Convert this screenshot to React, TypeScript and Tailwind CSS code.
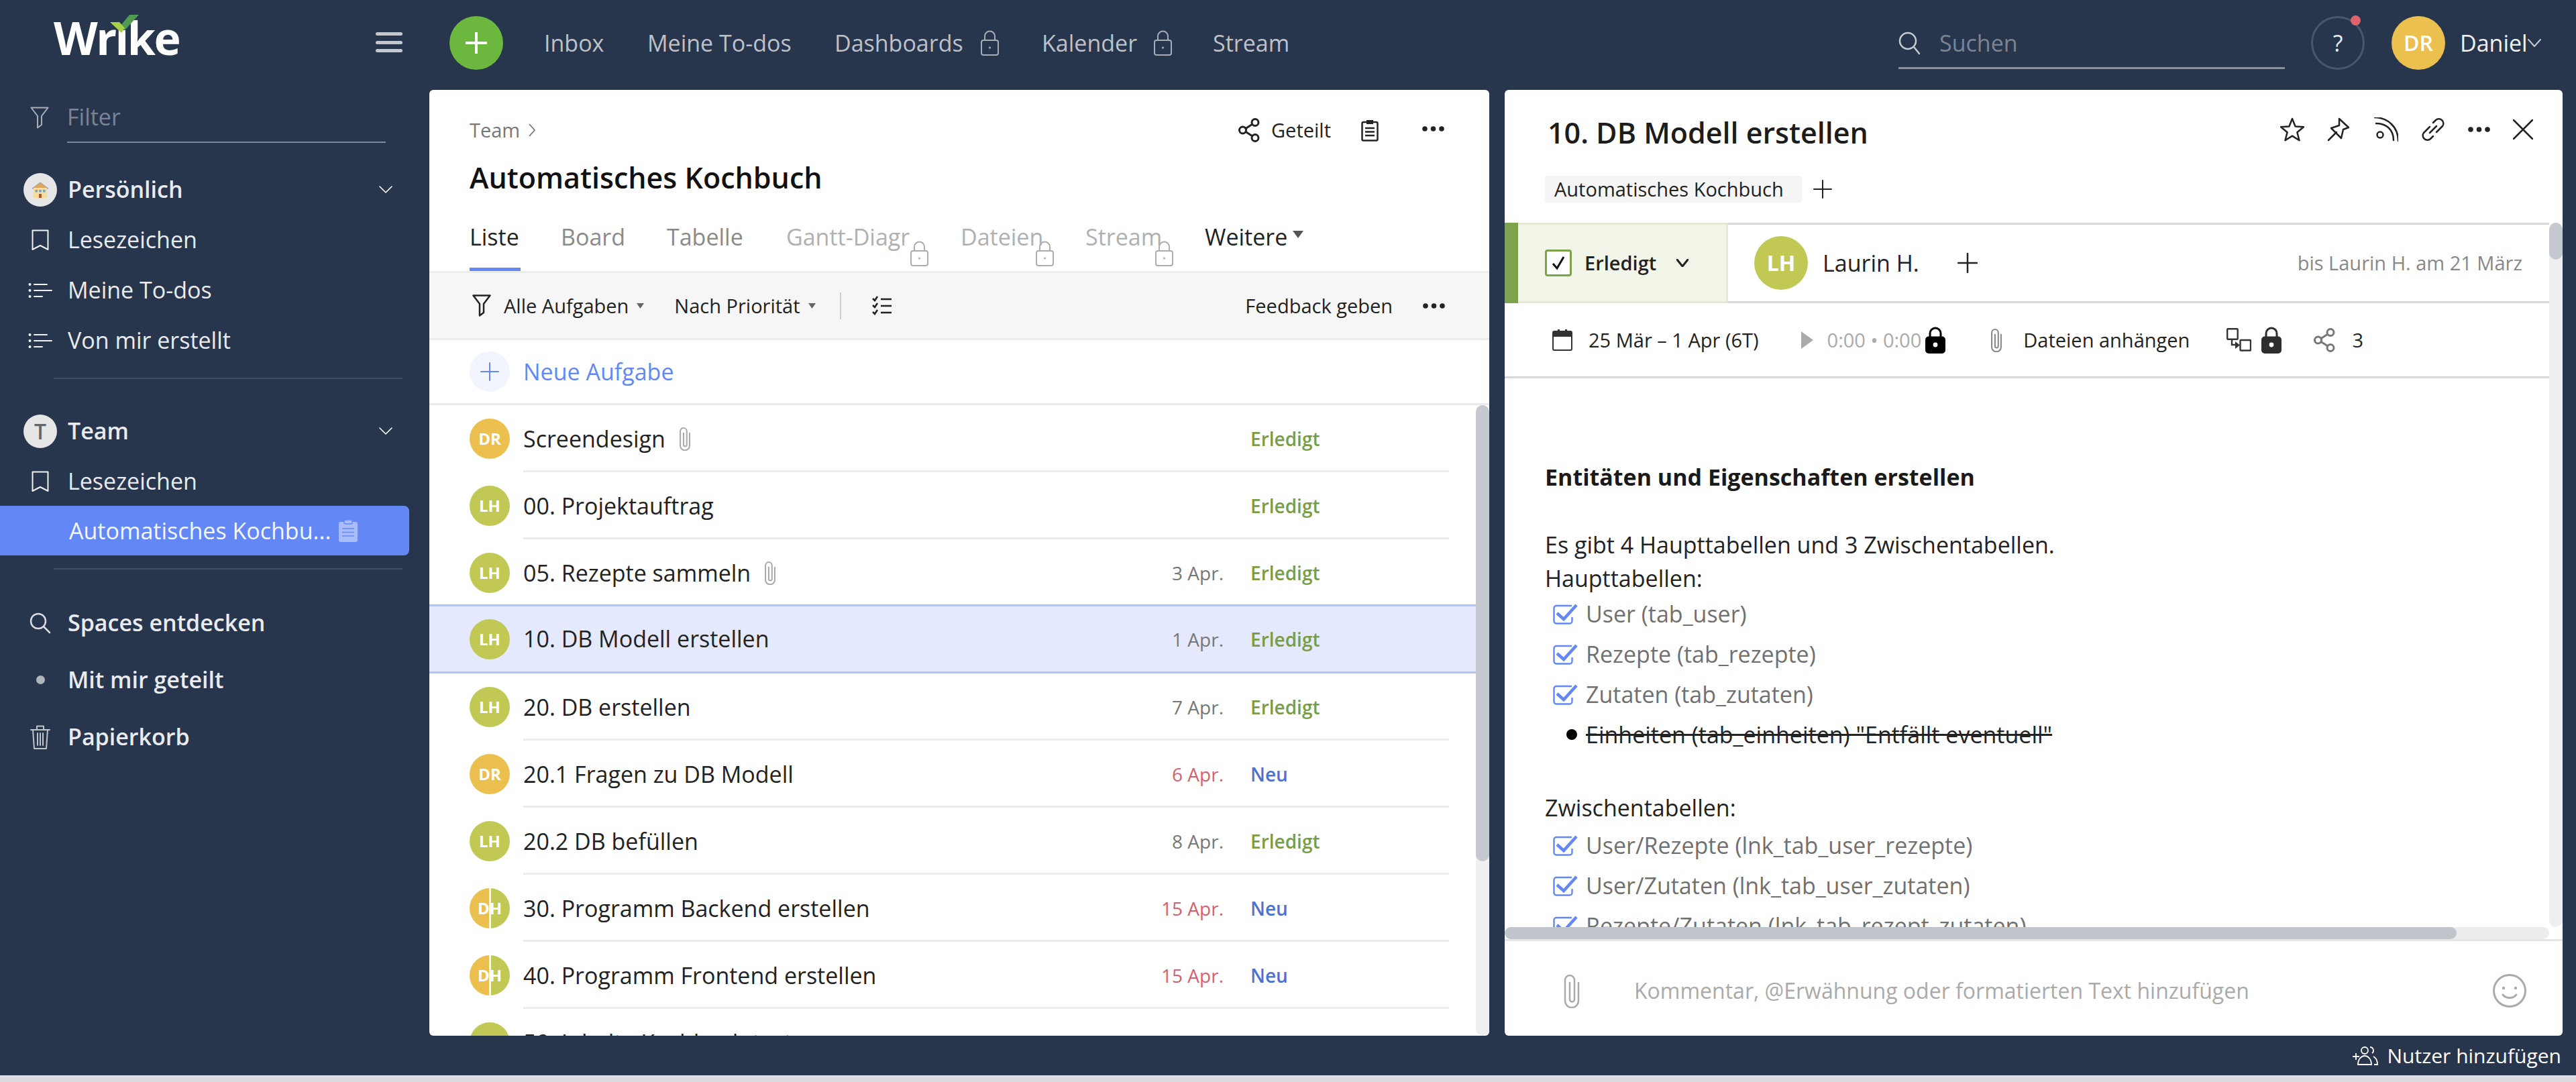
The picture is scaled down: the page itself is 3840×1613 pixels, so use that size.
import React from "react";

const font = { fontFamily: '"Open Sans", sans-serif' };

function Svg({ w, h, vb, children, className = "", color = "currentColor", sw = 2, fill = "none" }: any) {
  return (
    <svg width={w} height={h} viewBox={vb || `0 0 ${w} ${h}`} fill={fill} stroke={color} strokeWidth={sw} strokeLinecap="round" strokeLinejoin="round" className={`shrink-0 ${className}`}>
      {children}
    </svg>
  );
}

function LockOutline({ color = "#a8adb5", className = "" }: any) {
  return (
    <Svg w={29} h={40} color={color} className={className}>
      <path d="M7 16 V10 a7.5 7.5 0 0 1 15 0 V16" />
      <rect x="2" y="16" width="25" height="22" rx="3" />
      <circle cx="14.5" cy="27" r="1.6" fill={color} stroke="none" />
    </Svg>
  );
}
function LockSolid({ color = "#000" }: any) {
  return (
    <Svg w={30} h={40} color={color} sw={3}>
      <path d="M7 17 V10 a8 8 0 0 1 16 0 V17" />
      <rect x="1.5" y="16" width="27" height="22.5" rx="3.5" fill={color} />
      <circle cx="15" cy="27" r="3.4" fill="#fff" stroke="none" />
    </Svg>
  );
}
function Clip({ w = 26, h = 52, color = "#aaa", sw = 2.5 }: any) {
  return (
    <Svg w={w} h={h} vb="0 0 26 52" color={color} sw={sw}>
      <path d="M23 14 V41 a10 10 0 0 1 -20 0 V10 a7 7 0 0 1 14 0 V39 a3.5 3.5 0 0 1 -7 0 V14" />
    </Svg>
  );
}
function Dots() {
  return (
    <svg width="33" height="8" viewBox="0 0 33 8" className="shrink-0">
      <circle cx="4" cy="4" r="3.8" fill="#222" />
      <circle cx="16.5" cy="4" r="3.8" fill="#222" />
      <circle cx="29" cy="4" r="3.8" fill="#222" />
    </svg>
  );
}
function Caret({ big = false }: any) {
  return big ? (
    <svg width="16" height="11" viewBox="0 0 16 11" className="shrink-0"><path d="M0 0H16L8 11Z" fill="#555" /></svg>
  ) : (
    <svg width="11" height="8" viewBox="0 0 11 8" className="shrink-0"><path d="M0 0H11L5.5 8Z" fill="#666" /></svg>
  );
}
function Plus({ size = 28, color = "#222", sw = 2.5 }: any) {
  return (
    <Svg w={size} h={size} color={color} sw={sw}>
      <path d={`M${size / 2} 1V${size - 1}M1 ${size / 2}H${size - 1}`} />
    </Svg>
  );
}
function Share({ color = "#222", w = 32, h = 36 }: any) {
  return (
    <Svg w={w} h={h} vb="0 0 32 36" color={color} sw={3}>
      <circle cx="25" cy="6.5" r="5" />
      <circle cx="6.5" cy="18" r="5" />
      <circle cx="25" cy="29.5" r="5" />
      <path d="M11 15.5 L20.7 9.3 M11 20.5 L20.7 26.7" />
    </Svg>
  );
}
function Chevron({ w = 20, h = 11, color = "#fff", sw = 1.6 }: any) {
  return (
    <Svg w={w} h={h} color={color} sw={sw}>
      <path d={`M1 1 L${w / 2} ${h - 1} L${w - 1} 1`} />
    </Svg>
  );
}
function BookmarkI() {
  return (
    <Svg w={26} h={32} color="#f0f1f3" sw={2}>
      <path d="M1.5 1.5H24.5V30L13 24L1.5 30Z" />
    </Svg>
  );
}
function ListI() {
  return (
    <Svg w={36} h={24} color="#f0f1f3" sw={2}>
      <circle cx="2.5" cy="3" r="2" fill="#f0f1f3" stroke="none" />
      <circle cx="2.5" cy="12" r="2" fill="#f0f1f3" stroke="none" />
      <circle cx="2.5" cy="21" r="2" fill="#f0f1f3" stroke="none" />
      <path d="M9 3H28M9 12H35M9 21H21" />
    </Svg>
  );
}

function Logo() {
  return (
    <div className="relative mt-[26px] h-[60px] w-[178px] font-bold text-white text-[68px] leading-[60px] tracking-[-2.5px]">
      Wrıke
      <svg width="130" height="34" viewBox="0 -6 130 34" className="absolute left-0 top-[-6px]">
        <path d="M113 -4H127L106 19L100 12Z" fill="#4f9c50" />
        <path d="M84 7H98L106 16L101 23Z" fill="#a8cf45" />
      </svg>
    </div>
  );
}

function SideRow({ icon, text, bold = false, chevron = false, h = "h-[75px]" }: any) {
  return (
    <div className={`flex items-center ${h} pl-[35px] text-[#e9ebef] text-[34px]`}>
      <div className="w-[50px] flex justify-center shrink-0">{icon}</div>
      <span className={`ml-[16px] ${bold ? "font-semibold" : ""}`}>{text}</span>
      {chevron && <div className="ml-auto mr-[55px]"><Chevron /></div>}
    </div>
  );
}

function Sidebar() {
  return (
    <div className="w-[640px] shrink-0 flex flex-col">
      <div className="h-[138px] flex items-start pl-[80px] pr-[40px] justify-between">
        <Logo />
        <div className="mt-[48px] w-[40px] h-[30px] flex flex-col justify-between">
          <div className="h-[5px] rounded-full bg-[#c3c7ce]" />
          <div className="h-[5px] rounded-full bg-[#c3c7ce]" />
          <div className="h-[5px] rounded-full bg-[#c3c7ce]" />
        </div>
      </div>
      <div className="h-[75px] flex pl-[45px]">
        <div className="pt-[21px] w-[55px]">
          <Svg w={28} h={33} color="#a9aeb8" sw={2}>
            <path d="M1.5 1.5H26.5L17 14V27L11 31.5V14Z" />
          </Svg>
        </div>
        <div className="w-[475px] h-[75px] border-b-2 border-[#7e8796] flex items-center text-[34px] text-[#7a8494]">Filter</div>
      </div>
      <div className="mt-[32px]">
        <SideRow bold chevron text="Persönlich" icon={
          <div className="w-[50px] h-[50px] rounded-full bg-[#e6e6e6] flex items-center justify-center">
            <svg width="26" height="26" viewBox="0 0 26 26">
              <path d="M13 2L25 11H1Z" fill="#e3a55c" stroke="#9a9aa5" strokeWidth="1" />
              <rect x="3" y="10" width="20" height="15" fill="#f6dc9f" />
              <rect x="5.5" y="13" width="3.5" height="3.5" fill="#6aa7dd" />
              <rect x="11.2" y="13" width="3.5" height="3.5" fill="#6aa7dd" />
              <rect x="17" y="13" width="3.5" height="3.5" fill="#6aa7dd" />
              <rect x="11" y="19" width="4" height="6" fill="#b5562f" />
            </svg>
          </div>
        } />
        <SideRow text="Lesezeichen" icon={<BookmarkI />} />
        <SideRow text="Meine To-dos" icon={<ListI />} />
        <SideRow text="Von mir erstellt" icon={<ListI />} />
      </div>
      <div className="mt-[18px] ml-[80px] w-[520px] h-[2px] bg-[#3e4b62]" />
      <div className="mt-[40px]">
        <SideRow bold chevron text="Team" icon={
          <div className="w-[50px] h-[50px] rounded-full bg-[#e6e6e6] flex items-center justify-center text-[32px] text-[#666] font-semibold">T</div>
        } />
        <SideRow text="Lesezeichen" icon={<BookmarkI />} />
      </div>
      <div className="-mt-px w-[610px] h-[74px] rounded-r-[8px] bg-[#6388f5] flex items-center pl-[103px] text-[34px] text-[#f4f6fe]">
        <span>Automatisches Kochbu...</span>
        <svg width="28" height="33" viewBox="0 0 28 33" className="ml-[12px] shrink-0">
          <rect x="0" y="3" width="28" height="30" rx="3" fill="#a9bdfb" />
          <rect x="8" y="0" width="12" height="6" rx="2" fill="#a9bdfb" stroke="#6388f5" strokeWidth="1.5" />
          <path d="M5 13H23M5 18.5H23M5 24H23" stroke="#6388f5" strokeWidth="1.6" />
        </svg>
      </div>
      <div className="mt-[19px] ml-[80px] w-[520px] h-[2px] bg-[#3e4b62]" />
      <div className="mt-[37px]">
        <SideRow bold h="h-[85px]" text="Spaces entdecken" icon={
          <Svg w={32} h={32} color="#d9dce2" sw={2.5}>
            <circle cx="13" cy="13" r="11" />
            <path d="M21 21L30 30" />
          </Svg>
        } />
        <SideRow bold h="h-[85px]" text="Mit mir geteilt" icon={<div className="w-[13px] h-[13px] rounded-full bg-[#aeb3bc]" />} />
        <SideRow bold h="h-[85px]" text="Papierkorb" icon={
          <Svg w={30} h={38} color="#bfc3ca" sw={2}>
            <path d="M1 8H29M10 8V2.5H20V8M4 8L6 36H24L26 8M11 13V31M15 13V31M19 13V31" />
          </Svg>
        } />
      </div>
    </div>
  );
}

function NavLink({ w, children }: any) {
  return <div className={`${w} flex items-center shrink-0`}>{children}</div>;
}

function TopBar() {
  return (
    <div className="h-[134px] shrink-0 flex items-center pb-[6px] text-[34px] text-[#bcc1ca]">
      <div className="ml-[30px] w-[80px] h-[80px] rounded-full bg-[#6cb83f] flex items-center justify-center mr-[61px]">
        <Plus size={32} color="#fff" sw={4} />
      </div>
      <NavLink w="w-[154px]">Inbox</NavLink>
      <NavLink w="w-[279px]">Meine To-dos</NavLink>
      <NavLink w="w-[309px]">Dashboards<LockOutline className="ml-[25px]" /></NavLink>
      <NavLink w="w-[255px]">Kalender<LockOutline className="ml-[24px]" /></NavLink>
      <NavLink w="w-[110px]">Stream</NavLink>
      <div className="ml-auto mt-[4px] w-[576px] h-[74px] border-b-[3px] border-[#8a92a0] flex items-center">
        <Svg w={32} h={36} color="#c6cad1" sw={2.5}>
          <circle cx="14" cy="14" r="12" />
          <path d="M23 23L31 33" />
        </Svg>
        <span className="ml-[29px] text-[#7a8494]">Suchen</span>
      </div>
      <div className="relative ml-[39px] w-[80px] h-[80px] rounded-full border-[3px] border-[#4b5769] flex items-center justify-center text-[#e9ebef]">
        ?
        <div className="absolute right-[3px] top-[-4px] w-[15px] h-[15px] rounded-full bg-[#dd646c]" />
      </div>
      <div className="ml-[40px] w-[80px] h-[80px] rounded-full bg-[#ecc04e] flex items-center justify-center text-white text-[32px] font-semibold">DR</div>
      <div className="ml-[22px] w-[173px] flex items-center text-[#f0f1f3]">
        Daniel
        <Chevron w={20} h={12} color="#c6cad1" sw={2} />
      </div>
    </div>
  );
}

function Avatar({ k, size = "w-[60px] h-[60px]", text = "text-[24px]" }: any) {
  if (k === "DH")
    return (
      <div className={`relative ${size} rounded-full overflow-hidden flex shrink-0 gap-[3px]`}>
        <div className="flex-1 bg-[#ecc04e]" />
        <div className="flex-1 bg-[#c1c954]" />
        <div className={`absolute inset-0 flex items-center justify-center text-white font-bold ${text}`}>DH</div>
      </div>
    );
  const bg = k === "DR" ? "bg-[#ecc04e]" : "bg-[#c1c954]";
  return <div className={`${size} ${bg} rounded-full flex items-center justify-center text-white font-bold shrink-0 ${text}`}>{k}</div>;
}

const rows = [
  { a: "DR", t: "Screendesign", clip: true, d: "", s: "Erledigt" },
  { a: "LH", t: "00. Projektauftrag", d: "", s: "Erledigt" },
  { a: "LH", t: "05. Rezepte sammeln", clip: true, d: "3 Apr.", s: "Erledigt" },
  { a: "LH", t: "10. DB Modell erstellen", d: "1 Apr.", s: "Erledigt", sel: true },
  { a: "LH", t: "20. DB erstellen", d: "7 Apr.", s: "Erledigt" },
  { a: "DR", t: "20.1 Fragen zu DB Modell", d: "6 Apr.", red: true, s: "Neu" },
  { a: "LH", t: "20.2 DB befüllen", d: "8 Apr.", s: "Erledigt" },
  { a: "DH", t: "30. Programm Backend erstellen", d: "15 Apr.", red: true, s: "Neu" },
  { a: "DH", t: "40. Programm Frontend erstellen", d: "15 Apr.", red: true, s: "Neu" },
  { a: "LH", t: "50. Inhalte Kochbuch testen", d: "", s: "" },
];

function Row({ r, hideSep }: any) {
  const content = (
    <>
      <div className="text-[#222] text-[34px] flex items-center">
        {r.t}
        {r.clip && <div className="ml-[20px] flex"><Clip w={18} h={36} sw={3} /></div>}
      </div>
      <div className={`ml-auto text-[28px] ${r.red ? "text-[#d9606a]" : "text-[#777]"}`}>{r.d}</div>
      <div className={`ml-[40px] w-[296px] text-[28px] font-semibold ${r.s === "Neu" ? "text-[#4a74d0]" : "text-[#7a9c44]"}`}>{r.s}</div>
    </>
  );
  if (r.sel) {
    return (
      <div className="-mt-[3px] h-[103px] shrink-0 flex items-center pl-[60px] pr-[40px] bg-[#e4e9fd] border-y-[3px] border-[#b2c5fb]">
        <Avatar k={r.a} />
        <div className="ml-[20px] flex-1 flex items-center">{content}</div>
      </div>
    );
  }
  return (
    <div className="h-[100px] shrink-0 flex items-center pl-[60px] pr-[40px]">
      <Avatar k={r.a} />
      <div className={`ml-[20px] flex-1 h-full flex items-center pt-[3px] border-b-[3px] ${hideSep ? "border-transparent" : "border-[#ececec]"}`}>{content}</div>
    </div>
  );
}

function Tab({ w, color, children, lock, active }: any) {
  return (
    <div className={`relative ${w} h-full pt-[38px] leading-[40px] shrink-0 ${color}`}>
      {children}
      {lock && <LockOutline color="#adadad" className={`absolute top-[63px] ${lock}`} />}
      {active && <div className="absolute left-0 bottom-0 w-[76px] h-[5px] bg-[#6388f5]" />}
    </div>
  );
}

function ListPanel() {
  return (
    <div className="w-[1580px] shrink-0 h-full bg-white rounded-[6px] overflow-hidden flex flex-col">
      <div className="h-[270px] shrink-0 px-[60px] pt-[40px]">
        <div className="h-[40px] flex items-center text-[#777] text-[29px]">
          Team
          <svg width="12" height="22" viewBox="0 0 12 22" fill="none" stroke="#777" strokeWidth="1.8" className="ml-[12px]"><path d="M2 2L10 11L2 20" /></svg>
          <div className="ml-auto flex items-center text-[#222]">
            <Share />
            <span className="ml-[17px]">Geteilt</span>
            <svg width="26" height="33" viewBox="0 0 26 33" fill="none" stroke="#222" strokeWidth="2.5" className="ml-[45px]">
              <rect x="1.5" y="4" width="23" height="27.5" rx="2" />
              <rect x="8" y="1" width="10" height="6" fill="#222" stroke="none" />
              <path d="M6 13H20M6 18.5H20M6 24H20" />
            </svg>
            <div className="ml-[65px] mr-[7px] mb-[4px] flex"><Dots /></div>
          </div>
        </div>
        <div className="mt-[21px] h-[60px] flex items-center text-[43px] font-semibold text-[#111]">Automatisches Kochbuch</div>
        <div className="flex h-[109px] text-[34px]">
          <Tab w="w-[136px]" color="text-[#222]" active>Liste</Tab>
          <Tab w="w-[158px]" color="text-[#8a8a8a]">Board</Tab>
          <Tab w="w-[178px]" color="text-[#8a8a8a]">Tabelle</Tab>
          <Tab w="w-[260px]" color="text-[#b0b0b0]" lock="left-[184px]">Gantt-Diagr</Tab>
          <Tab w="w-[186px]" color="text-[#b0b0b0]" lock="left-[111px]">Dateien</Tab>
          <Tab w="w-[178px]" color="text-[#b0b0b0]" lock="left-[103px]">Stream</Tab>
          <div className="pt-[38px] leading-[40px] text-[#222] flex items-start">
            Weitere
            <div className="ml-[8px] mt-[11px]"><Caret big /></div>
          </div>
        </div>
      </div>
      <div className="h-[103px] shrink-0 bg-[#f6f6f6] border-y-[3px] border-[#ececec] flex items-center pl-[64px] pr-[66px] text-[29px] text-[#222]">
        <Svg w={28} h={33} color="#222" sw={2.5}>
          <path d="M1.5 1.5H26.5L17 14V27L11 31.5V14Z" />
        </Svg>
        <span className="ml-[19px]">Alle Aufgaben</span>
        <div className="ml-[12px]"><Caret /></div>
        <span className="ml-[45px]">Nach Priorität</span>
        <div className="ml-[12px]"><Caret /></div>
        <div className="ml-[36px] w-[2px] h-[40px] bg-[#cfcfcf]" />
        <svg width="30" height="30" viewBox="0 0 30 30" fill="none" stroke="#222" strokeWidth="2.5" className="ml-[46px]">
          <path d="M1 4L4 7L8 1M1 14L4 17L8 11M1 24L4 27L8 21M13 5H29M13 15H29M13 25H29" />
        </svg>
        <span className="ml-auto mr-[45px]">Feedback geben</span>
        <Dots />
      </div>
      <div className="h-[97px] shrink-0 border-b-[3px] border-[#ececec] flex items-center pl-[60px]">
        <div className="w-[60px] h-[60px] rounded-full bg-[#f2f5fe] flex items-center justify-center">
          <Plus size={28} color="#6388f5" sw={2} />
        </div>
        <span className="ml-[20px] text-[34px] text-[#6388f5]">Neue Aufgabe</span>
      </div>
      <div className="flex-1 flex min-h-0">
        <div className="flex-1 flex flex-col overflow-hidden">
          {rows.map((r, i) => <Row key={i} r={r} hideSep={rows[i + 1]?.sel} />)}
        </div>
        <div className="w-[20px] bg-[#efeff1] rounded-full shrink-0">
          <div className="h-[680px] bg-[#c5c8ce] rounded-full" />
        </div>
      </div>
    </div>
  );
}

function CheckItem({ children }: any) {
  return (
    <div className="h-[60px] shrink-0 flex items-center text-[#707070]">
      <svg width="37" height="31" viewBox="0 0 37 31" fill="none" className="ml-[12px] mr-[12px] shrink-0">
        <path d="M28 3H5a3.5 3.5 0 0 0-3.5 3.5V26A3.5 3.5 0 0 0 5 29.5H25A3.5 3.5 0 0 0 28.5 26V20" stroke="#6388f5" strokeWidth="2.4" />
        <path d="M6 14L16 23L35 2" stroke="#6388f5" strokeWidth="4.5" />
      </svg>
      {children}
    </div>
  );
}

function DetailPanel() {
  return (
    <div className="ml-[23px] w-[1577px] shrink-0 h-full bg-white rounded-[6px] overflow-hidden flex flex-col">
      <div className="h-[198px] shrink-0 pl-[64px] pr-[44px] pt-[34px]">
        <div className="h-[60px] flex items-center">
          <span className="text-[43px] font-semibold text-[#1c1c1c]">10. DB Modell erstellen</span>
          <div className="ml-auto -mt-[10px] flex items-center gap-[34px] text-[#222]">
            <Svg w={36} h={36} color="#222" sw={2.5}>
              <path d="M18 2L22.6 13.5L35 14.3L25.4 22.2L28.5 34.3L18 27.6L7.5 34.3L10.6 22.2L1 14.3L13.4 13.5Z" />
            </Svg>
            <Svg w={36} h={36} color="#222" sw={2.5}>
              <path d="M2 34L14 22M18 2L32 15L24 18L21 31L6 16L18 12Z" />
            </Svg>
            <Svg w={36} h={36} color="#222" sw={2.5}>
              <circle cx="9" cy="26" r="4.5" />
              <path d="M3 9C18 9 29 18 29 34" />
              <path d="M3 -1C24 -1 39 14 39 34" transform="translate(-3 1) scale(1.0)" />
            </Svg>
            <Svg w={36} h={36} color="#222" sw={2.5}>
              <path d="M13 14L4 23A6.5 6.5 0 0 0 5 32A6.5 6.5 0 0 0 14 32L18 28M23 22L32 13A6.5 6.5 0 0 0 31 4A6.5 6.5 0 0 0 22 4L18 8M13 23L23 13" />
            </Svg>
            <Dots />
            <Svg w={30} h={30} color="#222" sw={2.5}>
              <path d="M1 1L29 29M29 1L1 29" />
            </Svg>
          </div>
        </div>
        <div className="mt-[34px] -ml-[4px] flex items-center">
          <div className="h-[40px] w-[383px] rounded-[4px] bg-[#f5f5f5] flex items-center pl-[14px] text-[29px] text-[#222]">Automatisches Kochbuch</div>
          <div className="ml-[17px]"><Plus size={28} sw={2} /></div>
        </div>
      </div>
      <div className="flex-1 flex min-h-0">
        <div className="flex-1 flex flex-col overflow-hidden min-w-0">
          <div className="h-[120px] shrink-0 flex">
            <div className="w-[20px] bg-[#7ea44b] shrink-0" />
            <div className="w-[313px] shrink-0 bg-[#f2f6e9] border-y-[3px] border-r-[3px] border-[#e4e9d6] flex items-center pl-[40px]">
              <div className="w-[40px] h-[40px] rounded-[4px] border-[3px] border-[#7ea44b] bg-white flex items-center justify-center">
                <svg width="24" height="24" viewBox="0 0 24 24" fill="none" stroke="#111" strokeWidth="3"><path d="M4 13L10 20L20 3" /></svg>
              </div>
              <span className="ml-[19px] text-[29px] font-semibold text-[#222]">Erledigt</span>
              <div className="ml-[30px]"><Chevron w={18} h={12} color="#222" sw={3} /></div>
            </div>
            <div className="flex-1 border-y-[3px] border-[#d7d7d7] flex items-center pl-[39px] pr-[40px]">
              <Avatar k="LH" size="w-[80px] h-[80px]" text="text-[32px]" />
              <span className="ml-[22px] w-[201px] text-[34px] text-[#222]">Laurin H.</span>
              <Plus size={30} sw={2.5} />
              <span className="ml-auto text-[29px] text-[#888]">bis Laurin H. am 21 März</span>
            </div>
          </div>
          <div className="h-[112px] shrink-0 border-b-[3px] border-[#d7d7d7] flex items-center pl-[71px] text-[29px] text-[#222]">
            <svg width="30" height="32" viewBox="0 0 30 32" className="shrink-0">
              <rect x="1" y="3" width="28" height="28" rx="2" fill="#fff" stroke="#333" strokeWidth="2" />
              <path d="M1 5a2 2 0 0 1 2-2H27a2 2 0 0 1 2 2V11H1Z" fill="#333" />
              <rect x="8" y="0" width="3" height="4" fill="#333" />
              <rect x="19" y="0" width="3" height="4" fill="#333" />
            </svg>
            <span className="ml-[24px]">25 Mär – 1 Apr (6T)</span>
            <svg width="18" height="26" viewBox="0 0 18 26" className="ml-[63px] shrink-0"><path d="M0 0L18 13L0 26Z" fill="#aaa" /></svg>
            <span className="ml-[21px] text-[#aaa]">0:00 • 0:00</span>
            <div className="ml-[6px] flex"><LockSolid /></div>
            <div className="ml-[66px] flex"><Clip w={20} h={36} color="#888" sw={3} /></div>
            <span className="ml-[30px]">Dateien anhängen</span>
            <svg width="37" height="35" viewBox="0 0 37 35" fill="none" stroke="#333" strokeWidth="2.4" className="ml-[55px] shrink-0">
              <rect x="1.2" y="1.2" width="15.5" height="15.5" rx="1" />
              <rect x="20.5" y="18" width="15.5" height="15.5" rx="1" />
              <path d="M8 17V25H14" />
              <path d="M13 20L20 25.5L13 31Z" fill="#333" stroke="none" />
            </svg>
            <div className="ml-[15px] flex"><LockSolid color="#2e2e2e" /></div>
            <div className="ml-[48px] flex"><Share color="#777" /></div>
            <span className="ml-[25px]">3</span>
          </div>
          <div className="flex-1 pl-[60px] pt-[122px] flex flex-col overflow-hidden text-[34px] leading-[50px] text-[#222] min-h-0">
            <div className="h-[50px] shrink-0 font-bold text-[#1a1a1a]">Entitäten und Eigenschaften erstellen</div>
            <div className="mt-[51px] h-[50px] shrink-0">Es gibt 4 Haupttabellen und 3 Zwischentabellen.</div>
            <div className="h-[50px] shrink-0 -mb-[2px]">Haupttabellen:</div>
            <CheckItem>User (tab_user)</CheckItem>
            <CheckItem>Rezepte (tab_rezepte)</CheckItem>
            <CheckItem>Zutaten (tab_zutaten)</CheckItem>
            <div className="h-[60px] shrink-0 flex items-center">
              <div className="ml-[32px] mr-[13px] w-[16px] h-[16px] rounded-full bg-black shrink-0" />
              <span className="line-through">Einheiten (tab_einheiten) "Entfällt eventuell"</span>
            </div>
            <div className="mt-[54px] h-[50px] shrink-0 mb-px">Zwischentabellen:</div>
            <CheckItem>User/Rezepte (lnk_tab_user_rezepte)</CheckItem>
            <CheckItem>User/Zutaten (lnk_tab_user_zutaten)</CheckItem>
            <CheckItem>Rezepte/Zutaten (lnk_tab_rezept_zutaten)</CheckItem>
          </div>
        </div>
        <div className="w-[20px] bg-[#efeff1] rounded-full shrink-0">
          <div className="h-[55px] bg-[#c5c8ce] rounded-full" />
        </div>
      </div>
      <div className="h-[18px] shrink-0 pr-[20px]">
        <div className="h-full bg-[#eceded] rounded-full">
          <div className="h-full w-[1419px] bg-[#c0c4cb] rounded-full" />
        </div>
      </div>
      <div className="h-[144px] shrink-0 border-t-[3px] border-[#e4e4e4] flex items-center pt-[6px] pl-[87px] pr-[54px] text-[32px] text-[#aaa]">
        <Clip w={26} h={52} />
        <span className="ml-[80px]">Kommentar, @Erwähnung oder formatierten Text hinzufügen</span>
        <svg width="50" height="50" viewBox="0 0 50 50" fill="none" stroke="#aaa" strokeWidth="3" strokeLinecap="round" className="ml-auto shrink-0">
          <circle cx="25" cy="25" r="23.5" />
          <path d="M15 31C20 37 30 37 35 31" />
          <circle cx="16" cy="21" r="2.2" fill="#aaa" stroke="none" />
          <circle cx="34" cy="21" r="2.2" fill="#aaa" stroke="none" />
        </svg>
      </div>
    </div>
  );
}

export default function App() {
  return (
    <div className="w-[3840px] h-[1613px] overflow-hidden flex flex-col bg-[#28364d]" style={font}>
      <div className="flex-1 flex min-h-0">
        <Sidebar />
        <div className="flex-1 flex flex-col min-w-0">
          <TopBar />
          <div className="h-[1410px] shrink-0 flex">
            <ListPanel />
            <DetailPanel />
          </div>
          <div className="flex-1 flex items-center justify-end pr-[22px] text-[30px] text-white">
            <svg width="42" height="30" viewBox="0 0 42 30" fill="none" stroke="#fff" strokeWidth="1.8" className="mr-[11px] shrink-0">
              <path d="M1 16H11M6 11V21" />
              <circle cx="19" cy="7" r="5" />
              <path d="M9 28C9 20 14 15 19 15C24 15 29 20 29 28Z" />
              <path d="M27 2a5 5 0 0 1 3 9M33 28H38C38 22 36 18 32 16" />
            </svg>
            Nutzer hinzufügen
          </div>
        </div>
      </div>
      <div className="h-[10px] shrink-0 bg-[#d9dbe0]" />
    </div>
  );
}
